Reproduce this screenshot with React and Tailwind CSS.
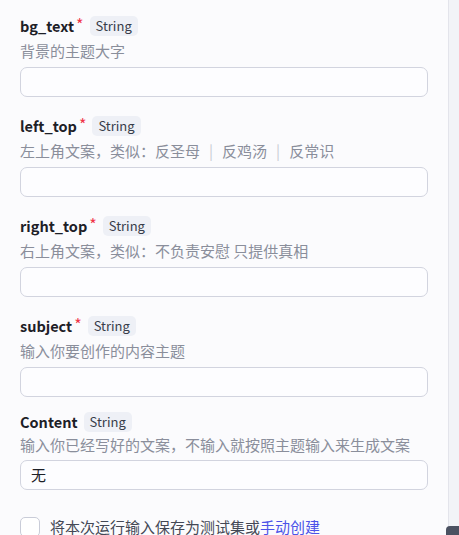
import React from 'react';

const fields = [
  { name: 'bg_text', required: true, desc: '背景的主题大字', value: '' },
  { name: 'left_top', required: true, desc: 'left', value: '' },
  { name: 'right_top', required: true, desc: '右上角文案，类似：不负责安慰 只提供真相', value: '' },
  { name: 'subject', required: true, desc: '输入你要创作的内容主题', value: '' },
];

function Label({ name, required }) {
  return (
    <div className="flex h-5 items-center">
      <span className="text-[14.5px] font-bold leading-5 text-[#1d2027]">{name}</span>
      {required && (
        <span className="ml-[2px] mt-[1px] self-start text-[16px] leading-[14px] text-[#f0364a]">*</span>
      )}
      <span className="ml-[6px] flex h-5 items-center rounded-[5px] bg-[#eef0f6] px-[6px] text-[13px] text-[#383d4a]">
        String
      </span>
    </div>
  );
}

function Desc({ children }) {
  return <div className="h-5 text-[15px] leading-5 text-[#8a8e9b]">{children}</div>;
}

function Input({ value }) {
  return (
    <div className="flex h-[30px] items-center rounded-[7px] border border-[#d2d4df] bg-[#fdfdff] px-[10px] text-[15px] text-[#1d2027]">
      {value}
    </div>
  );
}

export default function App() {
  return (
    <div
      className="relative flex h-[535px] w-[459px] overflow-hidden bg-[#f2f3f7]"
      style={{ fontFamily: '"Noto Sans CJK SC", "Noto Sans", sans-serif' }}
    >
      <div className="w-[449px] border-r border-[#e3e4eb] bg-[#fbfbfd] pl-5 pr-5 pt-4">
        {fields.map((f, i) => (
          <div key={f.name} className={i < 3 ? 'mb-[19px]' : 'mb-[15px]'}>
            <Label name={f.name} required={f.required} />
            <div className="mt-[5px]">
              {f.desc === 'left' ? (
                <Desc>
                  左上角文案，类似：反圣母
                  <span className="mx-[9px] text-[#c9cbd4]">|</span>
                  反鸡汤
                  <span className="mx-[9px] text-[#c9cbd4]">|</span>
                  反常识
                </Desc>
              ) : (
                <Desc>{f.desc}</Desc>
              )}
            </div>
            <div className="mt-[6px]">
              <Input value={f.value} />
            </div>
          </div>
        ))}

        {/* Content, optional */}
        <div>
          <Label name="Content" />
          <div className="mt-[3px]">
            <Desc>输入你已经写好的文案，不输入就按照主题输入来生成文案</Desc>
          </div>
          <div className="mt-[5px]">
            <Input value="无" />
          </div>
        </div>

        <div className="mt-[27px] flex items-center">
          <div className="h-5 w-5 rounded-[5px] border border-[#c9ccd8] bg-white"></div>
          <span className="ml-[10px] text-[15px] leading-5 text-[#444855]">
            将本次运行输入保存为测试集或<span className="text-[#4d53e8]">手动创建</span>
          </span>
        </div>
      </div>

      <div className="absolute left-[446px] top-[526px] h-6 w-6 rounded-[4px] bg-[#4b5161]"></div>
    </div>
  );
}
